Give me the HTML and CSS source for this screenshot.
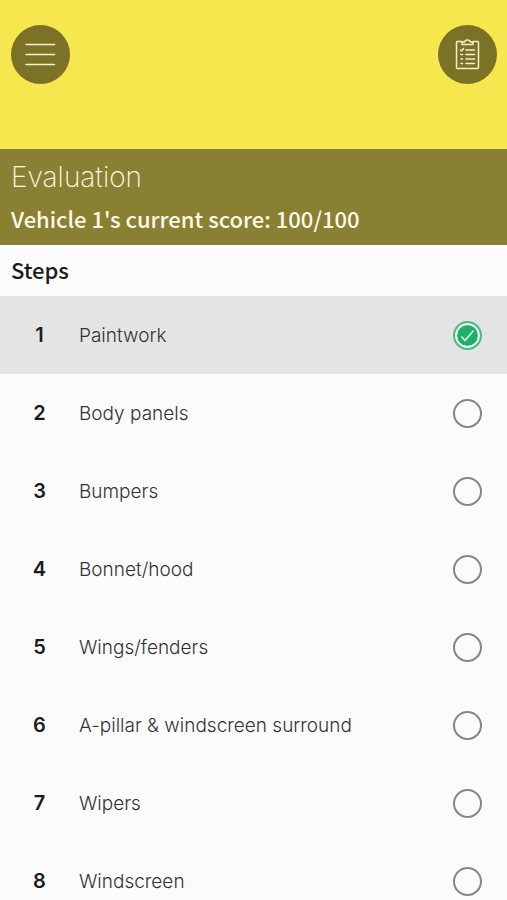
FILE: index.html
```html
<!DOCTYPE html>
<html lang="en">
<head>
<meta charset="utf-8">
<meta name="viewport" content="width=device-width, initial-scale=1">
<title>Evaluation</title>
<link rel="stylesheet" href="styles.css">
</head>
<body>
<header class="topbar">
  <button class="round-button" type="button" aria-label="Menu">
    <svg viewBox="0 0 59 59" aria-hidden="true"><path d="M15 19.500H43.500M15 29.500H43.500M15 39.500H43.500"/></svg>
  </button>
  <button class="round-button" type="button" aria-label="Checklist">
    <svg viewBox="0 0 59 59" aria-hidden="true">
      <path d="M24 16.500H19.500Q18.500 16.500 18.500 17.500V42.500Q18.500 43.500 19.500 43.500H39.500Q40.500 43.500 40.500 42.500V17.500Q40.500 16.500 39.500 16.500H35"/>
      <path d="M24 19.500V17H26.500Q27 15 29.500 15T32.500 17H35V19.500Z"/>
      <path d="M28 25H36.500M28 29.500H36.500M28 34H36.500M28 38.500H36.500"/>
      <path d="M22.500 25L23.500 26L25.500 23.500M23 29.500H24.500M23 34H24.500M23 38.500H24.500"/>
    </svg>
  </button>
</header>
<section class="summary">
  <h1 class="title">Evaluation</h1>
  <p class="score">Vehicle 1's current score: 100/100</p>
</section>
<main class="content">
  <h2 class="heading">Steps</h2>
  <ol class="steps">
    <li><label class="step"><span class="number">1</span><span class="name">Paintwork</span><span class="check"><input type="checkbox" checked><svg viewBox="0 0 29 29" aria-hidden="true"><path d="M8.500 15.500L12 19.500L20.500 9.500"/></svg></span></label></li>
    <li><label class="step"><span class="number">2</span><span class="name">Body panels</span><span class="check"><input type="checkbox"></span></label></li>
    <li><label class="step"><span class="number">3</span><span class="name">Bumpers</span><span class="check"><input type="checkbox"></span></label></li>
    <li><label class="step"><span class="number">4</span><span class="name">Bonnet/hood</span><span class="check"><input type="checkbox"></span></label></li>
    <li><label class="step"><span class="number">5</span><span class="name">Wings/fenders</span><span class="check"><input type="checkbox"></span></label></li>
    <li><label class="step"><span class="number">6</span><span class="name">A-pillar &amp; windscreen surround</span><span class="check"><input type="checkbox"></span></label></li>
    <li><label class="step"><span class="number">7</span><span class="name">Wipers</span><span class="check"><input type="checkbox"></span></label></li>
    <li><label class="step"><span class="number">8</span><span class="name">Windscreen</span><span class="check"><input type="checkbox"></span></label></li>
  </ol>
</main>
</body>
</html>
```
FILE: styles.css
```css
* {
  box-sizing: border-box;
}

body {
  margin: 0;
  height: 100vh;
  display: flex;
  flex-direction: column;
  overflow: hidden;
  background: #fbfbfb;
  color: #1c1c1c;
  font-family: Inter, "Liberation Sans", sans-serif;
}

.topbar {
  flex: none;
  display: flex;
  justify-content: space-between;
  align-items: flex-start;
  padding: 25px 10px 65px 11px;
  background: #f7e74f;
}

.round-button {
  width: 59px;
  height: 59px;
  padding: 0;
  border: 0;
  border-radius: 50%;
  background: #7b7228;
}

.round-button svg {
  display: block;
  fill: none;
  stroke: #f5efd0;
  stroke-width: 1.5;
  stroke-linecap: round;
  stroke-linejoin: round;
}

.summary {
  flex: none;
  padding: 9px 11px 7px;
  background: #8a8033;
  color: #fff9e6;
}

.title {
  margin: 0 0 2px;
  font-size: 28px;
  line-height: 38px;
  font-weight: 250;
}

.score,
.heading {
  margin: 0;
  font-family: "Noto Sans CJK SC", "Noto Sans", sans-serif;
  font-size: 22px;
  font-weight: 500;
}

.score {
  line-height: 40px;
}

.content {
  flex: 1;
  min-height: 0;
  overflow-y: auto;
  scrollbar-width: none;
}

.heading {
  padding: 0 11px 3px;
  line-height: 48px;
}

.steps {
  margin: 0;
  padding: 0;
  list-style: none;
}

.step {
  display: grid;
  grid-template-columns: 79px 1fr 29px;
  align-items: center;
  height: 78px;
  padding-right: 25px;
}

.step:has(:checked) {
  background: #e4e4e4;
}

.number {
  text-align: center;
  font-size: 20px;
  font-weight: 600;
}

.name {
  font-size: 19px;
  font-weight: 300;
  color: #333;
}

.check {
  display: grid;
}

.check > * {
  grid-area: 1 / 1;
  width: 29px;
  height: 29px;
}

.check input {
  appearance: none;
  margin: 0;
  border: 2px solid #868686;
  border-radius: 50%;
}

.check input:checked {
  padding: 2px;
  border-color: #4fb888;
  background: #1fae6d content-box;
  box-shadow: inset 0 0 0 2px #e4f4ea;
}

.check svg {
  z-index: 1;
  pointer-events: none;
  fill: none;
  stroke: #d9f3e5;
  stroke-width: 1.5;
}
```
